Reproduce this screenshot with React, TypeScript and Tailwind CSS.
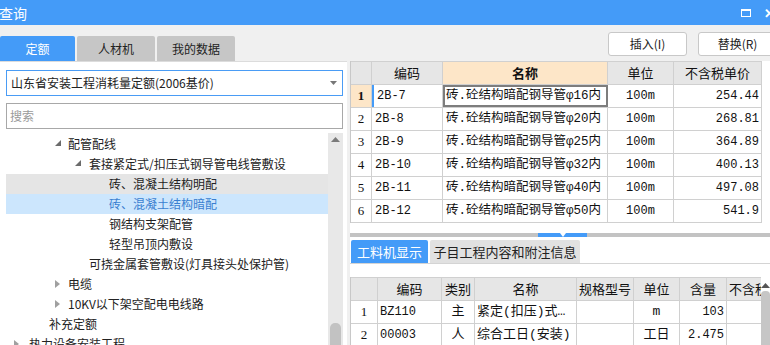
const ui = "font-['Noto_Sans_CJK_SC',sans-serif]";
const grid = "font-['Liberation_Mono','Noto_Sans_CJK_SC',monospace]";

const treeRows = [
  { level: 2, label: "配管配线", arrow: "open" },
  { level: 3, label: "套接紧定式/扣压式钢导管电线管敷设", arrow: "open" },
  { level: 4, label: "砖、混凝土结构明配", hover: true },
  { level: 4, label: "砖、混凝土结构暗配", selected: true },
  { level: 4, label: "钢结构支架配管" },
  { level: 4, label: "轻型吊顶内敷设" },
  { level: 3, label: "可挠金属套管敷设(灯具接头处保护管)" },
  { level: 2, label: "电缆", arrow: "closed" },
  { level: 2, label: "10KV以下架空配电电线路", arrow: "closed" },
  { level: 1, label: "补充定额" },
  { level: 0, label: "热力设备安装工程", arrow: "closed" },
];

const padByLevel = ["pl-[23px]", "pl-[43px]", "pl-[62px]", "pl-[83px]", "pl-[103px]"];
const arrowByLevel = ["left-[8px]", "left-[28px]", "left-[49px]", "left-[69px]", "left-[89px]"];

const quotaRows = [
  { code: "2B-7", name: "砖.砼结构暗配钢导管φ16内", unit: "100m", price: "254.44" },
  { code: "2B-8", name: "砖.砼结构暗配钢导管φ20内", unit: "100m", price: "268.81" },
  { code: "2B-9", name: "砖.砼结构暗配钢导管φ25内", unit: "100m", price: "364.89" },
  { code: "2B-10", name: "砖.砼结构暗配钢导管φ32内", unit: "100m", price: "400.13" },
  { code: "2B-11", name: "砖.砼结构暗配钢导管φ40内", unit: "100m", price: "497.08" },
  { code: "2B-12", name: "砖.砼结构暗配钢导管φ50内", unit: "100m", price: "541.9" },
];

const resRows = [
  { code: "BZ110", kind: "主", name: "紧定(扣压)式…", spec: "", unit: "m", qty: "103" },
  { code: "00003", kind: "人", name: "综合工日(安装)", spec: "", unit: "工日", qty: "2.475" },
];

function TreeArrow({ open }: { open: boolean }) {
  return open ? (
    <svg width="6" height="6" viewBox="0 0 6 6">
      <polygon points="6,0 6,6 0,6" fill="#6b6b6b" />
    </svg>
  ) : (
    <svg width="5" height="8" viewBox="0 0 5 8">
      <polygon points="0,0 5,4 0,8" fill="#a0a0a0" />
    </svg>
  );
}

export default function App() {
  return (
    <div className={`w-[770px] h-[345px] overflow-hidden bg-[#f0f0f0] flex flex-col ${ui}`}>
      {/* Title bar */}
      <div className="h-[25px] bg-[#449bf8] flex items-center justify-between text-white shrink-0">
        <span className="text-[14px] leading-none -ml-[1px]">查询</span>
        <div className="flex items-center gap-[13px] -mr-[5px]">
          <div className="w-[10px] h-[8px] border border-white border-t-2" />
          <span className="text-[13px] leading-none font-bold">✕</span>
        </div>
      </div>

      {/* Tabs + buttons */}
      <div className="h-[36px] flex justify-between shrink-0">
        <div className="flex items-end gap-[2px] text-[12px]">
          <div className="w-[75px] h-[25px] bg-[#449bf8] text-white flex items-center justify-center rounded-t-[2px]">定额</div>
          <div className="w-[78px] h-[25px] bg-[#c6c6c6] text-[#222] flex items-center justify-center rounded-t-[2px]">人材机</div>
          <div className="w-[78px] h-[25px] bg-[#c6c6c6] text-[#222] flex items-center justify-center rounded-t-[2px]">我的数据</div>
        </div>
        <div className="flex gap-[11px] pt-[7px] text-[12px] text-[#222]">
          <button className="w-[79px] h-[24px] bg-white border border-[#c8c8c8] rounded-[3px] flex items-center justify-center">插入(I)</button>
          <button className="w-[79px] h-[24px] bg-white border border-[#c8c8c8] rounded-[3px] flex items-center justify-center -mr-[7px]">替换(R)</button>
        </div>
      </div>

      {/* Body */}
      <div className="flex-1 flex min-h-0">
        {/* Left panel */}
        <div className="w-[347px] bg-white flex flex-col pt-[8px] pl-[6px] pr-[4px] text-[12px] text-[#222] border-t border-[#dcdcdc]">
          <div className="h-[26px] border border-[#4a9cf5] flex items-center justify-between px-[4px] shrink-0">
            <span>山东省安装工程消耗量定额(2006基价)</span>
            <svg width="7" height="4" viewBox="0 0 7 4" className="mr-[1px]">
              <polygon points="0,0 7,0 3.5,4" fill="#777" />
            </svg>
          </div>
          <div className="h-[26px] mt-[7px] border border-[#a8a8a8] flex items-center px-[3px] text-[#9a9a9a] shrink-0">搜索</div>
          <div className="flex-1 flex mt-[4px] min-h-0">
            <div className="flex-1 pt-[1px] overflow-hidden">
              {treeRows.map((r, i) => (
                <div
                  key={i}
                  className={`relative h-[20px] flex items-center whitespace-nowrap ${padByLevel[r.level]} ${
                    r.selected ? "bg-[#cce6fd] text-[#3a7fd0]" : r.hover ? "bg-[#e5e5e5]" : ""
                  }`}
                >
                  {r.arrow && (
                    <span className={`absolute ${arrowByLevel[r.level]} top-[6px]`}>
                      <TreeArrow open={r.arrow === "open"} />
                    </span>
                  )}
                  {r.label}
                </div>
              ))}
            </div>
            <div className="w-[15px] bg-[#e8e8e8] flex flex-col items-center justify-between">
              <svg width="9" height="5" viewBox="0 0 9 5" className="mt-[4px]">
                <polygon points="0,5 9,5 4.5,0" fill="#7a7a7a" />
              </svg>
              <div className="w-[11px] h-[22px] bg-[#c2c2c2] rounded-t-[5px]" />
            </div>
          </div>
        </div>

        <div className="w-[3px]" />

        {/* Right panel */}
        <div className="flex-1 bg-white flex flex-col min-w-0">
          {/* Quota table */}
          <div className={`w-[412px] text-[12px] text-[#111] ${grid} border-l border-[#c8c8c8]`}>
            <div className={`flex h-[24px] bg-[#e6e6e6] border-b border-t border-[#d0d0d0] text-[13px] ${ui}`}>
              <div className="w-[21px] border-r border-[#d0d0d0]" />
              <div className="w-[71px] border-r border-[#d0d0d0] flex items-center justify-center">编码</div>
              <div className="w-[165px] border-r border-[#d0d0d0] bg-[#fde6c8] flex items-center justify-center font-bold">名称</div>
              <div className="w-[66px] border-r border-[#d0d0d0] flex items-center justify-center">单位</div>
              <div className="w-[88px] border-r border-[#d0d0d0] flex items-center justify-center">不含税单价</div>
            </div>
            {quotaRows.map((r, i) => (
              <div key={i} className="flex h-[23px] border-b border-[#d0d0d0]">
                <div
                  className={`w-[21px] border-r border-[#d0d0d0] flex items-center justify-center font-['Liberation_Serif',serif] text-[13px] ${
                    i === 0 ? "bg-[#fde6c8] font-bold" : ""
                  }`}
                >
                  {i + 1}
                </div>
                <div
                  className={`w-[71px] border-r border-[#d0d0d0] flex items-center pl-[3px] ${
                    i === 0 ? "border-l-2 border-l-[#449bf8] pl-[1px]" : ""
                  }`}
                >
                  {r.code}
                </div>
                <div
                  className={`w-[165px] flex items-center whitespace-nowrap text-[12.5px] ${
                    i === 0 ? "border-2 border-[#7d7d7d] pl-[1px]" : "border-r border-[#d0d0d0] pl-[3px]"
                  }`}
                >
                  {r.name}
                </div>
                <div className="w-[66px] border-r border-[#d0d0d0] flex items-center justify-center">{r.unit}</div>
                <div className="w-[88px] border-r border-[#d0d0d0] flex items-center justify-end pr-[2px]">{r.price}</div>
              </div>
            ))}
          </div>
          <div className="h-[10px]" />

          {/* Splitter */}
          <div className="h-[4px] bg-[#c3c3c3] flex shrink-0">
            <div className="w-[188px]" />
            <div className="w-[49px] bg-[#449bf8] flex justify-center">
              <svg width="6" height="4" viewBox="0 0 6 4">
                <polygon points="0,0 6,0 3,4" fill="#fff" />
              </svg>
            </div>
          </div>

          {/* Bottom tabs */}
          <div className="h-[27px] bg-white flex items-end gap-[2px] pl-[1px] border-b border-[#d4d4d4] text-[13px] shrink-0">
            <div className="w-[77px] h-[23px] bg-[#449bf8] text-white flex items-center justify-center rounded-t-[2px]">工料机显示</div>
            <div className="w-[150px] h-[23px] bg-[#e1e1e1] text-[#222] flex items-center justify-center rounded-t-[2px]">子目工程内容和附注信息</div>
          </div>
          <div className="h-[13px] shrink-0" />

          {/* Resource table */}
          <div className="flex-1 flex min-h-0">
            <div className={`flex-1 text-[12px] text-[#111] ${grid} border-l border-[#c8c8c8] overflow-hidden`}>
              <div className={`flex h-[24px] bg-[#e6e6e6] border-y border-[#d0d0d0] whitespace-nowrap text-[13px] ${ui}`}>
                <div className="w-[27px] shrink-0 border-r border-[#d0d0d0]" />
                <div className="w-[64px] shrink-0 border-r border-[#d0d0d0] flex items-center justify-center">编码</div>
                <div className="w-[33px] shrink-0 border-r border-[#d0d0d0] flex items-center justify-center">类别</div>
                <div className="w-[102px] shrink-0 border-r border-[#d0d0d0] flex items-center justify-center">名称</div>
                <div className="w-[57px] shrink-0 border-r border-[#d0d0d0] flex items-center justify-center">规格型号</div>
                <div className="w-[46px] shrink-0 border-r border-[#d0d0d0] flex items-center justify-center">单位</div>
                <div className="w-[47px] shrink-0 border-r border-[#d0d0d0] flex items-center justify-center">含量</div>
                <div className="w-[34px] shrink-0 flex items-center pl-[2px] overflow-hidden">不含税单价</div>
              </div>
              {resRows.map((r, i) => (
                <div key={i} className="flex h-[23px] border-b border-[#d0d0d0] whitespace-nowrap">
                  <div className="w-[27px] shrink-0 border-r border-[#d0d0d0] flex items-center justify-center font-['Liberation_Serif',serif] text-[13px]">{i + 1}</div>
                  <div className="w-[64px] shrink-0 border-r border-[#d0d0d0] flex items-center pl-[2px]">{r.code}</div>
                  <div className="w-[33px] shrink-0 border-r border-[#d0d0d0] flex items-center justify-center text-[13px]">{r.kind}</div>
                  <div className="w-[102px] shrink-0 border-r border-[#d0d0d0] flex items-center pl-[2px] overflow-hidden text-[13px]">{r.name}</div>
                  <div className="w-[57px] shrink-0 border-r border-[#d0d0d0]">{r.spec}</div>
                  <div className="w-[46px] shrink-0 border-r border-[#d0d0d0] flex items-center justify-center text-[13px]">{r.unit}</div>
                  <div className="w-[47px] shrink-0 border-r border-[#d0d0d0] flex items-center justify-end pr-[2px]">{r.qty}</div>
                  <div className="w-[34px] shrink-0" />
                </div>
              ))}
            </div>
            <div className="w-[9px] flex flex-col items-center pt-[6px] bg-white">
              <svg width="9" height="5" viewBox="0 0 9 5">
                <polygon points="0,5 9,5 4.5,0" fill="#555" />
              </svg>
              <div className="w-[9px] flex-1 mt-[3px] bg-[#c6c6c6] rounded-t-[4px]" />
            </div>
          </div>
        </div>
      </div>
    </div>
  );
}
